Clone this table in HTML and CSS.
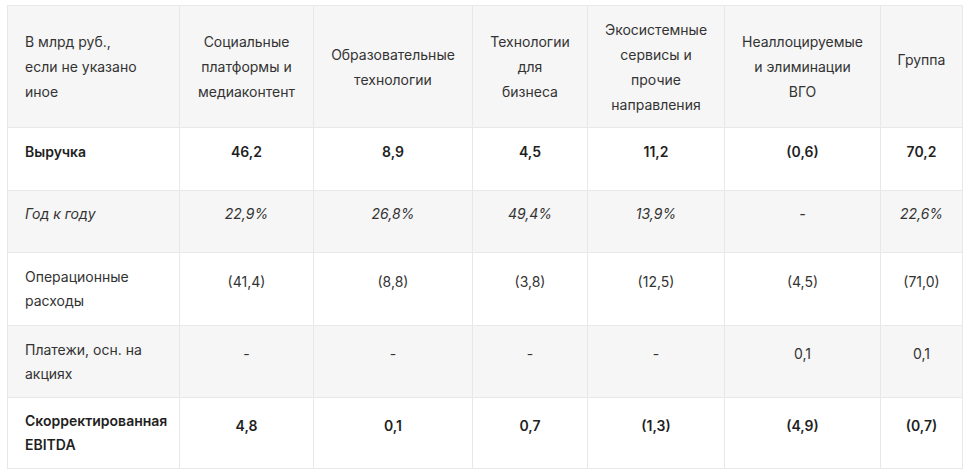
FILE: index.html
```html
<!DOCTYPE html>
<html lang="ru">
<head>
<meta charset="utf-8">
<title>Таблица</title>
<link rel="stylesheet" href="styles.css">
</head>
<body>
<div class="wrap">
<table class="fin">
  <colgroup>
    <col class="c1"><col class="c2"><col class="c3"><col class="c4"><col class="c5"><col class="c6"><col class="c7">
  </colgroup>
  <thead>
    <tr class="head">
      <th class="label">В млрд руб.,<br>если не указано<br>иное</th>
      <th>Социальные<br>платформы и<br>медиаконтент</th>
      <th>Образовательные<br>технологии</th>
      <th>Технологии<br>для<br>бизнеса</th>
      <th>Экосистемные<br>сервисы и<br>прочие<br>направления</th>
      <th>Неаллоцируемые<br>и элиминации<br>ВГО</th>
      <th class="single">Группа</th>
    </tr>
  </thead>
  <tbody>
    <tr class="row bold r1">
      <td class="label one">Выручка</td>
      <td class="one">46,2</td><td class="one">8,9</td><td class="one">4,5</td><td class="one">11,2</td><td class="one">(0,6)</td><td class="one">70,2</td>
    </tr>
    <tr class="row grey italic r2">
      <td class="label one">Год к году</td>
      <td class="one">22,9%</td><td class="one">26,8%</td><td class="one">49,4%</td><td class="one">13,9%</td><td class="one">-</td><td class="one">22,6%</td>
    </tr>
    <tr class="row r3">
      <td class="label">Операционные<br>расходы</td>
      <td class="one">(41,4)</td><td class="one">(8,8)</td><td class="one">(3,8)</td><td class="one">(12,5)</td><td class="one">(4,5)</td><td class="one">(71,0)</td>
    </tr>
    <tr class="row grey r4">
      <td class="label">Платежи, осн. на<br>акциях</td>
      <td class="one">-</td><td class="one">-</td><td class="one">-</td><td class="one">-</td><td class="one">0,1</td><td class="one">0,1</td>
    </tr>
    <tr class="row bold r5">
      <td class="label">Скорректированная<br>EBITDA</td>
      <td class="one">4,8</td><td class="one">0,1</td><td class="one">0,7</td><td class="one">(1,3)</td><td class="one">(4,9)</td><td class="one">(0,7)</td>
    </tr>
  </tbody>
</table>
</div>
</body>
</html>
```

FILE: styles.css
```css
html, body {
  margin: 0;
  padding: 0;
  background: #ffffff;
}

.wrap {
  padding: 5px 7px;
}

.fin {
  border-collapse: collapse;
  table-layout: fixed;
  width: 955px;
  font-family: Inter, "Noto Sans", sans-serif;
  font-size: 14px;
  color: #333333;
}

.c1 { width: 172px; }
.c2 { width: 134px; }
.c3 { width: 159px; }
.c4 { width: 115px; }
.c5 { width: 137px; }
.c6 { width: 156px; }
.c7 { width: 82px; }

.fin th,
.fin td {
  border: 1px solid #e8e8e8;
  text-align: center;
  vertical-align: middle;
  padding: 11px 8px;
  line-height: 24px;
}

.fin th {
  font-weight: 400;
  line-height: 25px;
  padding: 10px 6px 10px;
  background: #f6f6f6;
}

.fin th.single {
  padding-bottom: 25px;
}

.fin .label {
  text-align: left;
  padding-left: 17px;
  padding-right: 6px;
}

.fin td.one {
  padding-bottom: 26px;
}

.head { height: 122px; }
.r1 { height: 63px; }
.r2 { height: 62px; }
.r3 { height: 73px; }
.r4 { height: 72px; }
.r5 { height: 71px; }

.grey td {
  background: #f6f6f6;
}

.bold td {
  font-weight: 600;
  color: #1f1f1f;
}

.italic td {
  font-style: italic;
}
```
